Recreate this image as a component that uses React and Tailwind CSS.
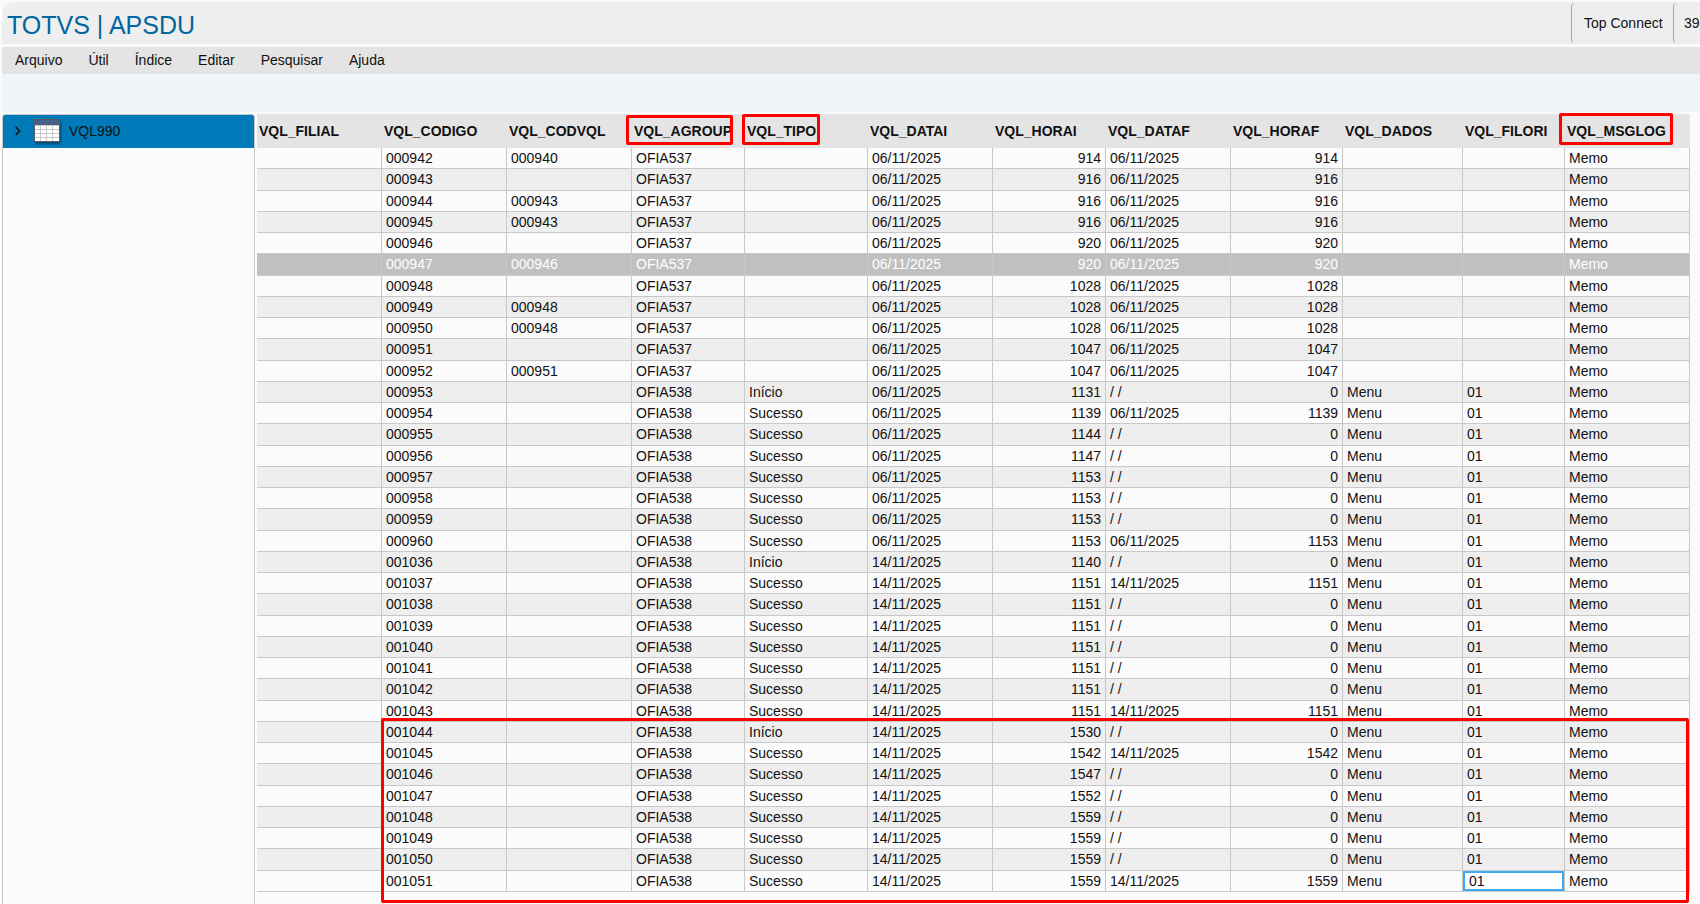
import { ChevronRight } from "lucide-react";

const menus = ["Arquivo", "Útil", "Índice", "Editar", "Pesquisar", "Ajuda"];

const columns = [
  { name: "VQL_FILIAL", width: 125 },
  { name: "VQL_CODIGO", width: 125 },
  { name: "VQL_CODVQL", width: 125 },
  { name: "VQL_AGROUP", width: 113, mark: "-left-1.5 top-px w-[107px] h-[30px]" },
  { name: "VQL_TIPO", width: 123, mark: "-left-[3px] top-0 w-[78px] h-[31px]" },
  { name: "VQL_DATAI", width: 125 },
  { name: "VQL_HORAI", width: 113, right: true },
  { name: "VQL_DATAF", width: 125 },
  { name: "VQL_HORAF", width: 112, right: true },
  { name: "VQL_DADOS", width: 120 },
  { name: "VQL_FILORI", width: 102 },
  { name: "VQL_MSGLOG", width: 125, mark: "-left-1.5 -top-px w-[114px] h-8" },
];

const D6 = "06/11/2025";
const D14 = "14/11/2025";
const NONE = "/ /";

// codigo, codvql, tipo, datai, horai, dataf, horaf
const logs = [
  ["000942", "000940", "", D6, 914, D6, 914],
  ["000943", "", "", D6, 916, D6, 916],
  ["000944", "000943", "", D6, 916, D6, 916],
  ["000945", "000943", "", D6, 916, D6, 916],
  ["000946", "", "", D6, 920, D6, 920],
  ["000947", "000946", "", D6, 920, D6, 920],
  ["000948", "", "", D6, 1028, D6, 1028],
  ["000949", "000948", "", D6, 1028, D6, 1028],
  ["000950", "000948", "", D6, 1028, D6, 1028],
  ["000951", "", "", D6, 1047, D6, 1047],
  ["000952", "000951", "", D6, 1047, D6, 1047],
  ["000953", "", "Início", D6, 1131, NONE, 0],
  ["000954", "", "Sucesso", D6, 1139, D6, 1139],
  ["000955", "", "Sucesso", D6, 1144, NONE, 0],
  ["000956", "", "Sucesso", D6, 1147, NONE, 0],
  ["000957", "", "Sucesso", D6, 1153, NONE, 0],
  ["000958", "", "Sucesso", D6, 1153, NONE, 0],
  ["000959", "", "Sucesso", D6, 1153, NONE, 0],
  ["000960", "", "Sucesso", D6, 1153, D6, 1153],
  ["001036", "", "Início", D14, 1140, NONE, 0],
  ["001037", "", "Sucesso", D14, 1151, D14, 1151],
  ["001038", "", "Sucesso", D14, 1151, NONE, 0],
  ["001039", "", "Sucesso", D14, 1151, NONE, 0],
  ["001040", "", "Sucesso", D14, 1151, NONE, 0],
  ["001041", "", "Sucesso", D14, 1151, NONE, 0],
  ["001042", "", "Sucesso", D14, 1151, NONE, 0],
  ["001043", "", "Sucesso", D14, 1151, D14, 1151],
  ["001044", "", "Início", D14, 1530, NONE, 0],
  ["001045", "", "Sucesso", D14, 1542, D14, 1542],
  ["001046", "", "Sucesso", D14, 1547, NONE, 0],
  ["001047", "", "Sucesso", D14, 1552, NONE, 0],
  ["001048", "", "Sucesso", D14, 1559, NONE, 0],
  ["001049", "", "Sucesso", D14, 1559, NONE, 0],
  ["001050", "", "Sucesso", D14, 1559, NONE, 0],
  ["001051", "", "Sucesso", D14, 1559, D14, 1559],
];

function toCells([codigo, codvql, tipo, datai, horai, dataf, horaf]) {
  // rows without a tipo come from the older routine
  const agroup = tipo ? "OFIA538" : "OFIA537";
  const dados = tipo ? "Menu" : "";
  const filori = tipo ? "01" : "";
  return ["", codigo, codvql, agroup, tipo, datai, horai, dataf, horaf, dados, filori, "Memo"];
}

function TableIcon() {
  return (
    <svg
      className="h-6 w-7 shrink-0 drop-shadow-[1px_2px_1px_rgba(0,0,0,0.4)]"
      viewBox="0 0 28 24"
      aria-hidden="true"
    >
      <rect x="1" y="0" width="26" height="23" rx="1" fill="#5b5b66" />
      <rect x="2" y="1" width="24" height="5" fill="#4a6087" />
      <rect x="2" y="6" width="24" height="16" fill="#c9c9c9" />
      {[2, 8, 14, 20].map((x) =>
        [7, 11, 15, 19].map((y) => (
          <rect key={`${x}-${y}`} x={x} y={y} width={x === 20 ? 6 : 5} height="3" fill="#fff" />
        ))
      )}
    </svg>
  );
}

function LogTable() {
  return (
    <div className="relative">
      <table className="w-full table-fixed border-separate border-spacing-0">
        <colgroup>
          {columns.map((col) => (
            <col key={col.name} style={{ width: col.width }} />
          ))}
        </colgroup>
        <thead>
          <tr className="h-[34px] bg-[#e4e4e4]">
            {columns.map((col) => (
              <th key={col.name} className="relative p-0 pl-0.5 text-left font-bold">
                {col.name}
                {col.mark && (
                  <span className={`absolute rounded-xs border-3 border-[#ff0000] ${col.mark}`} />
                )}
              </th>
            ))}
          </tr>
        </thead>
        <tbody>
          {logs.map((log) => {
            const selected = log[0] === "000947";
            return (
              <tr
                key={log[0]}
                className={`h-[21px] nth-[4n+2]:h-[22px] ${
                  selected ? "bg-[#c0c0c0] text-white" : "even:bg-[#eeeeee]"
                }`}
              >
                {toCells(log).map((value, i) => {
                  const editing = log[0] === "001051" && columns[i].name === "VQL_FILORI";
                  return (
                    <td
                      key={columns[i].name}
                      className={`border-r border-b border-[#c8c8c8] p-0 align-top leading-5 ${
                        columns[i].right ? "pr-1 text-right" : editing ? "" : "pl-1"
                      }`}
                    >
                      {editing ? (
                        <input
                          aria-label="VQL_FILORI"
                          defaultValue={value}
                          className="block h-5 w-full border-2 border-[#3fa9f5] bg-white px-1 outline-none"
                        />
                      ) : (
                        value
                      )}
                    </td>
                  );
                })}
              </tr>
            );
          })}
        </tbody>
      </table>
      {/* runs logged by the last execution */}
      <div className="pointer-events-none absolute right-px -bottom-[11px] left-[124px] h-[185px] rounded-xs border-3 border-[#ff0000]" />
    </div>
  );
}

export default function App() {
  return (
    <div className="flex min-h-screen flex-col overflow-hidden bg-[#fbfbfb] pt-0.5 pl-0.5 font-['Liberation_Sans',Arial,sans-serif] text-sm text-[#111]">
      <header className="flex h-[42px] items-stretch justify-between rounded-tl-xl bg-[#eeeeee]">
        <h1 className="pt-[5px] pl-[5px] text-[25px] leading-9 text-[#00669f]">TOTVS | APSDU</h1>
        <div className="flex py-px">
          <div className="flex w-[102px] items-center rounded-sm border-l border-[#a5a5a5] pl-3">
            Top Connect
          </div>
          <div className="flex w-[27px] items-center rounded-l-sm border-l border-[#a5a5a5] pl-2.5">
            39
          </div>
        </div>
      </header>

      <nav className="mt-[3px] flex h-[27px] items-center gap-[26px] bg-[#e4e4e4] pb-0.5 pl-[13px]">
        {menus.map((menu) => (
          <button key={menu} type="button">
            {menu}
          </button>
        ))}
      </nav>

      <div className="h-[38px] bg-[#f1f5f9]" />

      <div className="mt-0.5 flex flex-1">
        <aside className="mr-0.5 w-[253px] shrink-0 rounded-t-sm border-x border-t border-[#c8c8c8]">
          <button
            type="button"
            className="flex h-[33px] w-full items-center rounded-t-xs bg-[#007ab8] pb-0.5 pl-2"
          >
            <ChevronRight className="mr-2 size-3.5" strokeWidth={3} />
            <TableIcon />
            <span className="ml-2">VQL990</span>
          </button>
        </aside>
        <main className="mr-2.5 min-w-0 flex-1">
          <LogTable />
        </main>
      </div>
    </div>
  );
}
